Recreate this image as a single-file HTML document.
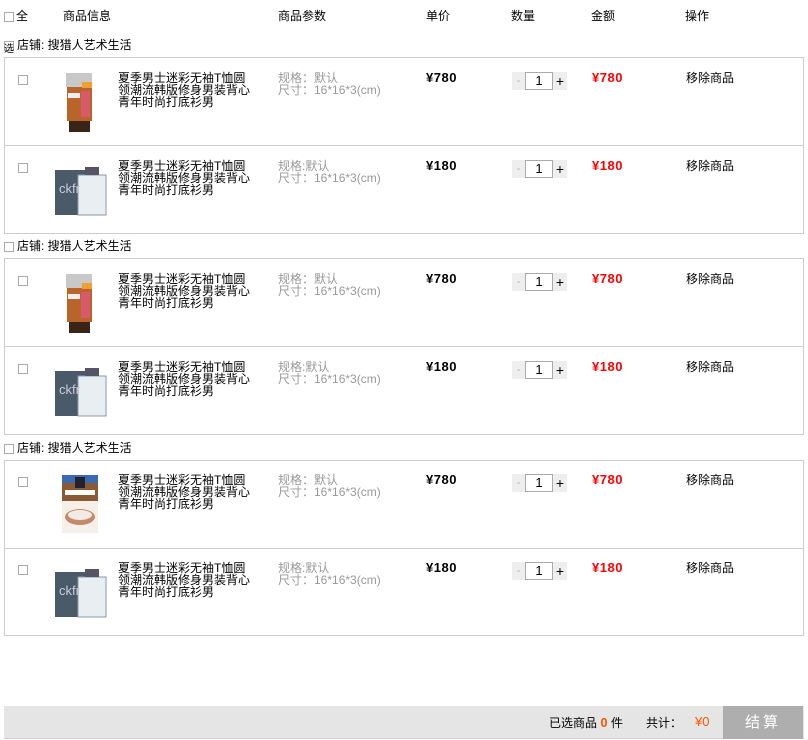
<!DOCTYPE html>
<html><head><meta charset="utf-8"><style>
*{margin:0;padding:0;box-sizing:border-box}
body{width:808px;height:740px;position:relative;background:#fff;font:12px/12px "Liberation Sans","Noto Sans CJK SC",sans-serif;color:#000;overflow:hidden}
.a{position:absolute;white-space:nowrap}
.cb{position:absolute;width:10px;height:10px;border:1px solid #aaa;background:#fff}
.box{position:absolute;left:4px;width:800px;border:1px solid #ccc}
.div{position:absolute;left:0;right:0;height:1px;background:#ccc}
.t{position:absolute;left:118px;width:133px;line-height:12px;font-size:12px;white-space:normal;word-break:break-all}
.sp{position:absolute;left:278px;color:#999;line-height:12px}
.pr{position:absolute;left:426px;font-weight:bold;font-family:"Liberation Sans",sans-serif;font-size:13px;letter-spacing:0.5px}
.am{position:absolute;left:592px;font-weight:bold;color:#f00;font-family:"Liberation Sans",sans-serif;font-size:13px;letter-spacing:0.5px}
.rm{position:absolute;left:686px}
.q{position:absolute;left:512px;width:55px;height:18px;background:#eee}
.q .m{position:absolute;left:0;top:0;width:13px;height:18px;color:#bbb;text-align:center;line-height:17px}
.q .i{position:absolute;left:13px;top:0;width:28px;height:18px;border:1px solid #aaa;background:#fff;text-align:center;line-height:16px;font-size:13px}
.q .p{position:absolute;left:41px;top:0;width:14px;height:18px;text-align:center;line-height:18px;font-size:14px}
</style></head><body>
<div class="cb" style="left:4px;top:12px"></div><div class="a" style="left:16px;top:10px">全</div>
<div class="a" style="left:63px;top:10px">商品信息</div>
<div class="a" style="left:278px;top:10px">商品参数</div>
<div class="a" style="left:426px;top:10px">单价</div>
<div class="a" style="left:511px;top:10px">数量</div>
<div class="a" style="left:591px;top:10px">金额</div>
<div class="a" style="left:685px;top:10px">操作</div>

<div class="cb" style="left:4px;top:41px"></div><div class="a" style="left:4px;top:44px;font-size:10px">选</div><div class="a" style="left:17px;top:39px">店铺: 搜猎人艺术生活</div>
<div class="box" style="top:57px;height:177px"><div class="div" style="top:87px"></div></div>
<div class="cb" style="left:4px;top:242px"></div><div class="a" style="left:17px;top:240px">店铺: 搜猎人艺术生活</div>
<div class="box" style="top:258px;height:177px"><div class="div" style="top:87px"></div></div>
<div class="cb" style="left:4px;top:444px"></div><div class="a" style="left:17px;top:442px">店铺: 搜猎人艺术生活</div>
<div class="box" style="top:460px;height:176px"><div class="div" style="top:87px"></div></div>

<svg width="0" height="0" style="position:absolute"><defs>
<g id="tube"><rect x="2" y="0" width="26" height="14" fill="#c8c8c8"/><rect x="3" y="14" width="25" height="34" fill="#b8642a"/><rect x="17" y="18" width="9" height="26" fill="#d85a6a"/><rect x="4" y="20" width="12" height="5" fill="#eee"/><rect x="5" y="48" width="21" height="11" fill="#3a2418"/><rect x="18" y="9" width="10" height="6" fill="#f0a030"/></g>
<g id="perf"><rect x="0" y="7" width="34" height="45" fill="#4a5a68"/><rect x="23" y="12" width="28" height="40" fill="#e8eef2" stroke="#8899aa"/><rect x="30" y="4" width="14" height="8" fill="#556"/><text x="4" y="30" font-size="13" fill="#ccd" font-family="Liberation Sans">ckfr</text></g>
<g id="oat"><rect x="0" y="0" width="36" height="58" fill="#f5f0ea"/><rect x="0" y="0" width="36" height="26" fill="#8a5a35"/><rect x="0" y="0" width="36" height="8" fill="#3a6ab0"/><rect x="13" y="2" width="10" height="11" fill="#223"/><rect x="3" y="15" width="30" height="5" fill="#fff"/><ellipse cx="18" cy="42" rx="15" ry="8" fill="#c68a6a"/><ellipse cx="18" cy="40" rx="12" ry="5" fill="#f2ece4"/></g>
</defs></svg>

<div class="cb" style="left:18px;top:75px"></div>
<svg class="a" style="left:64px;top:73px" width="32" height="60"><use href="#tube"/></svg>
<div class="t" style="top:72px">夏季男士迷彩无袖T恤圆领潮流韩版修身男装背心青年时尚打底衫男</div>
<div class="sp" style="top:72px">规格：默认<br>尺寸：16*16*3(cm)</div>
<div class="pr" style="top:72px">¥780</div>
<div class="q" style="top:72px"><div class="m">-</div><div class="i">1</div><div class="p">+</div></div>
<div class="am" style="top:72px">¥780</div>
<div class="rm" style="top:72px">移除商品</div>

<div class="cb" style="left:18px;top:163px"></div>
<svg class="a" style="left:55px;top:163px" width="56" height="56"><use href="#perf"/></svg>
<div class="t" style="top:160px">夏季男士迷彩无袖T恤圆领潮流韩版修身男装背心青年时尚打底衫男</div>
<div class="sp" style="top:160px">规格:默认<br>尺寸：16*16*3(cm)</div>
<div class="pr" style="top:160px">¥180</div>
<div class="q" style="top:160px"><div class="m">-</div><div class="i">1</div><div class="p">+</div></div>
<div class="am" style="top:160px">¥180</div>
<div class="rm" style="top:160px">移除商品</div>

<div class="cb" style="left:18px;top:276px"></div>
<svg class="a" style="left:64px;top:274px" width="32" height="60"><use href="#tube"/></svg>
<div class="t" style="top:273px">夏季男士迷彩无袖T恤圆领潮流韩版修身男装背心青年时尚打底衫男</div>
<div class="sp" style="top:273px">规格：默认<br>尺寸：16*16*3(cm)</div>
<div class="pr" style="top:273px">¥780</div>
<div class="q" style="top:273px"><div class="m">-</div><div class="i">1</div><div class="p">+</div></div>
<div class="am" style="top:273px">¥780</div>
<div class="rm" style="top:273px">移除商品</div>

<div class="cb" style="left:18px;top:364px"></div>
<svg class="a" style="left:55px;top:364px" width="56" height="56"><use href="#perf"/></svg>
<div class="t" style="top:361px">夏季男士迷彩无袖T恤圆领潮流韩版修身男装背心青年时尚打底衫男</div>
<div class="sp" style="top:361px">规格:默认<br>尺寸：16*16*3(cm)</div>
<div class="pr" style="top:361px">¥180</div>
<div class="q" style="top:361px"><div class="m">-</div><div class="i">1</div><div class="p">+</div></div>
<div class="am" style="top:361px">¥180</div>
<div class="rm" style="top:361px">移除商品</div>

<div class="cb" style="left:18px;top:477px"></div>
<svg class="a" style="left:62px;top:475px" width="38" height="60"><use href="#oat"/></svg>
<div class="t" style="top:474px">夏季男士迷彩无袖T恤圆领潮流韩版修身男装背心青年时尚打底衫男</div>
<div class="sp" style="top:474px">规格：默认<br>尺寸：16*16*3(cm)</div>
<div class="pr" style="top:474px">¥780</div>
<div class="q" style="top:474px"><div class="m">-</div><div class="i">1</div><div class="p">+</div></div>
<div class="am" style="top:474px">¥780</div>
<div class="rm" style="top:474px">移除商品</div>

<div class="cb" style="left:18px;top:565px"></div>
<svg class="a" style="left:55px;top:565px" width="56" height="56"><use href="#perf"/></svg>
<div class="t" style="top:562px">夏季男士迷彩无袖T恤圆领潮流韩版修身男装背心青年时尚打底衫男</div>
<div class="sp" style="top:562px">规格:默认<br>尺寸：16*16*3(cm)</div>
<div class="pr" style="top:562px">¥180</div>
<div class="q" style="top:562px"><div class="m">-</div><div class="i">1</div><div class="p">+</div></div>
<div class="am" style="top:562px">¥180</div>
<div class="rm" style="top:562px">移除商品</div>

<div class="a" style="left:4px;top:706px;width:800px;height:33px;background:#e5e5e5;border-bottom:1px solid #d0d0d0"></div>
<div class="a" style="left:549px;top:717px">已选商品 <b style="color:#f50;font-size:13px">0</b> 件</div>
<div class="a" style="left:646px;top:717px">共计：</div>
<div class="a" style="left:695px;top:716px;color:#f50;font-size:13px">¥0</div>
<div class="a" style="left:723px;top:706px;width:80px;height:33px;background:#aeaeae;color:#fff;font-size:15px;line-height:33px;text-align:center;letter-spacing:3px">结算</div>
</body></html>
